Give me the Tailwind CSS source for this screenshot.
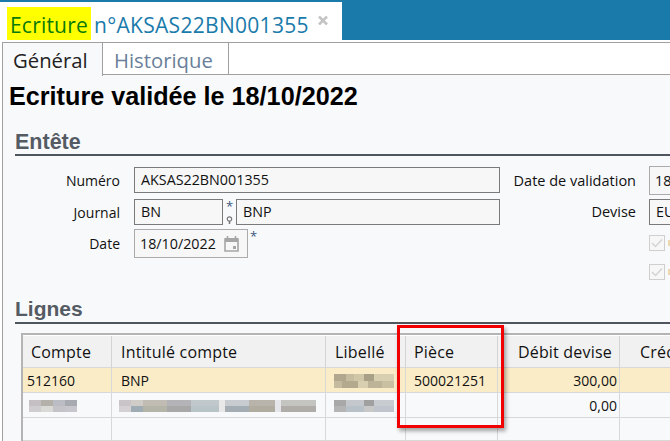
<!DOCTYPE html>
<html><head><meta charset="utf-8"><script src="https://cdn.jsdelivr.net/npm/@tailwindcss/browser@4"></script></head>
<body class="w-[670px] h-[441px] overflow-hidden bg-white font-['Open_Sans','Noto_Sans',sans-serif] text-[14px] text-[#111]">
<div class="relative w-[670px] h-[441px] overflow-hidden">
  <!-- window tab bar -->
  <div class="flex h-[40px] border-t-2 border-[#1a7bab]">
    <div class="w-[342px] flex items-end pl-[7px] bg-white whitespace-nowrap">
      <span class="h-[33px] w-[84px] bg-[#ffff00] text-[#0a7a0a] text-[21px] leading-[36px] pl-[3px] overflow-hidden tracking-[0.2px]">Ecriture</span>
      <span class="h-[33px] w-[227px] text-[#1a7bab] text-[21px] leading-[36px] pl-[3px] tracking-[0.3px]">n°AKSAS22BN001355</span>
      <svg width="10" height="9" viewBox="0 0 10 9" class="mb-[15px]"><path d="M1 .5l8 8M9 .5l-8 8" stroke="#c4c4c4" stroke-width="2.6"/></svg>
    </div>
    <div class="flex-1 bg-[#1a7bab]"></div>
  </div>
  <!-- panel -->
  <div class="mt-[2px] ml-[2px] border-l border-t border-[#a0a0a0] bg-[#f8f9fb] h-[399px]">
    <div class="flex h-[32px] bg-white">
      <div class="w-[100px] h-[33px] bg-[#f8f9fb] border-r border-[#a0a0a0] text-[20.3px] text-[#222] leading-[34px] pl-[10px] relative z-10">Général</div>
      <div class="w-[126px] border-b border-r border-[#a0a0a0] text-[20.3px] text-[#6a7f99] leading-[34px] pl-[11px]">Historique</div>
      <div class="flex-1 border-b border-[#a0a0a0]"></div>
    </div>
    <h1 class="font-['Liberation_Sans',sans-serif] font-bold text-[25.2px] leading-[28px] text-black mt-[7px] ml-[6px] whitespace-nowrap">Ecriture validée le 18/10/2022</h1>
    <!-- Entete -->
    <h2 class="font-['Liberation_Sans',sans-serif] font-bold text-[21.5px] leading-[28px] text-[#555b63] border-b-2 border-[#50565d] ml-[12px] mt-[18px] h-[28px]">Entête</h2>
    <div class="flex ml-[12px] mt-[11px]">
      <div class="w-[495px] shrink-0 flex flex-col">
        <div class="flex items-center h-[26px] mb-[6px]">
          <span class="w-[105px] shrink-0 text-right">Numéro</span>
          <div class="ml-[14px] w-[366px] shrink-0 h-[26px] border border-[#7a7a7a] bg-[#f7f7f7] pl-[6px] leading-[24px] text-[14.3px]">AKSAS22BN001355</div>
        </div>
        <div class="flex items-center h-[26px] mb-[4px]">
          <span class="w-[105px] shrink-0 text-right">Journal</span>
          <div class="ml-[14px] w-[89px] shrink-0 h-[26px] border border-[#7a7a7a] bg-[#f7f7f7] pl-[6px] leading-[24px] text-[14.3px]">BN</div>
          <div class="w-[13px] shrink-0 h-[26px] flex flex-col items-center justify-between text-[#3c5a80] text-[13px] leading-[14px]">
            <span>*</span>
            <svg width="7" height="8" viewBox="0 0 7 8" class="mb-[1px]"><circle cx="3.5" cy="3" r="2.2" fill="none" stroke="#777" stroke-width="1.2"/><path d="M3.5 5v3" stroke="#777" stroke-width="1.5"/></svg>
          </div>
          <div class="w-[264px] shrink-0 h-[26px] border border-[#7a7a7a] bg-[#f7f7f7] pl-[6px] leading-[24px] text-[14.3px]">BNP</div>
        </div>
        <div class="flex items-center h-[29px]">
          <span class="w-[105px] shrink-0 text-right">Date</span>
          <div class="ml-[14px] w-[114px] shrink-0 h-[29px] border border-[#ababab] bg-[#f7f7f7] pl-[5px] pr-[8px] leading-[27px] flex justify-between items-center text-[14.3px]">
            <span>18/10/2022</span>
            <svg width="15" height="16" viewBox="0 0 15 16"><path d="M1 3h13v12H1z" fill="none" stroke="#a6a6a6" stroke-width="1.6"/><path d="M1 2h13v4H1z" fill="#a6a6a6"/><path d="M3.5 0v3M11.5 0v3" stroke="#a6a6a6" stroke-width="1.6"/><path d="M9 10h3v3H9z" fill="#a6a6a6"/></svg>
          </div>
          <span class="self-start text-[#3c5a80] text-[13px] leading-[14px] ml-[2px]">*</span>
        </div>
      </div>
      <div class="flex flex-col shrink-0 w-[200px]">
        <div class="flex items-center h-[29px] -mt-[1px] mb-[4px]">
          <span class="w-[126px] shrink-0 text-right whitespace-nowrap text-[14.5px]">Date de validation</span>
          <div class="ml-[13px] w-[60px] shrink-0 h-[29px] border border-[#ababab] bg-[#f7f7f7] pl-[5px] leading-[27px] whitespace-nowrap text-[14.3px]">18/10/2022</div>
        </div>
        <div class="flex items-center h-[26px] mb-[10px]">
          <span class="w-[126px] shrink-0 text-right text-[14.5px]">Devise</span>
          <div class="ml-[13px] w-[60px] shrink-0 h-[26px] border border-[#7a7a7a] bg-[#f7f7f7] pl-[6px] leading-[24px] text-[14.3px]">EUR</div>
        </div>
        <div class="flex flex-col gap-[13px] pl-[139px]">
          <div class="flex items-center gap-[3px]"><div class="w-[16px] h-[16px] shrink-0 border border-[#cfcfcf] bg-[#f7f7f7] flex items-center justify-center"><svg width="12" height="10" viewBox="0 0 12 10"><path d="M1 5l3.5 3.5L11 1.5" fill="none" stroke="#d4d4d4" stroke-width="1.5"/></svg></div><div class="w-[2px] h-[6px] bg-[#ecd9b0]"></div></div>
          <div class="flex items-center gap-[3px]"><div class="w-[16px] h-[16px] shrink-0 border border-[#cfcfcf] bg-[#f7f7f7] flex items-center justify-center"><svg width="12" height="10" viewBox="0 0 12 10"><path d="M1 5l3.5 3.5L11 1.5" fill="none" stroke="#d4d4d4" stroke-width="1.5"/></svg></div><div class="w-[2px] h-[6px] bg-[#ecd9b0]"></div></div>
        </div>
      </div>
    </div>
    <!-- Lignes -->
    <h2 class="font-['Liberation_Sans',sans-serif] font-bold text-[21px] leading-[24px] text-[#555b63] border-b-2 border-[#50565d] ml-[12px] mt-[17px] h-[27px]">Lignes</h2>
    <div class="ml-[18px] mt-[9px] w-[700px] border-t-2 border-l-2 border-[#b4b4b4]">
      <div class="grid grid-cols-[89px_214px_80px_92px_122px_103px] h-[33px] bg-[#f1f1f1] border-b border-[#d8d8d8] border-t border-t-white text-[16px] leading-[32px] tracking-[0.2px] whitespace-nowrap">
        <div class="border-r border-[#d4d4d4] pl-[8px]">Compte</div>
        <div class="border-r border-[#d4d4d4] pl-[9px]">Intitulé compte</div>
        <div class="border-r border-[#d4d4d4] pl-[9px]">Libellé</div>
        <div class="border-r border-[#d4d4d4] pl-[8px]">Pièce</div>
        <div class="border-r border-[#d4d4d4] pr-[7px] text-right">Débit devise</div>
        <div class="pl-[20px]">Crédit devise</div>
      </div>
      <div class="grid grid-cols-[89px_214px_80px_92px_122px_103px] h-[25px] bg-[#fbecc8] border-b border-[#d8d8d8] leading-[25px]">
        <div class="border-r border-[#d8d8d8] pl-[4px]">512160</div>
        <div class="border-r border-[#d8d8d8] pl-[9px]">BNP</div>
        <div class="border-r border-[#d8d8d8] pl-[8px] flex flex-col justify-center">
          <div class="w-[60px] h-[7px] blur-[0.5px] bg-[linear-gradient(90deg,#b0a78e_0_12px,#c6bc9f_12px_20px,#d0c6a8_20px_30px,#a9a088_30px_40px,#d8cfb0_40px_60px)]"></div>
          <div class="w-[60px] h-[7px] blur-[0.5px] bg-[linear-gradient(90deg,#c4bb9f_0_8px,#b2a98f_8px_24px,#d8cfb0_24px_34px,#bdb398_34px_48px,#c9c0a2_48px_60px)]"></div>
        </div>
        <div class="border-r border-[#d8d8d8] pl-[8px]">500021251</div>
        <div class="border-r border-[#d8d8d8] pr-[2px] text-right">300,00</div>
        <div></div>
      </div>
      <div class="grid grid-cols-[89px_214px_80px_92px_122px_103px] h-[25px] border-b border-[#d8d8d8] leading-[25px]">
        <div class="border-r border-[#d8d8d8] pl-[6px] flex flex-col justify-center">
          <div class="w-[48px] h-[6px] blur-[0.5px] bg-[linear-gradient(90deg,#c4bfc2_0_12px,#b4b0aa_12px_24px,#bcbcc4_24px_36px,#a8aab2_36px_48px)]"></div>
          <div class="w-[48px] h-[6px] blur-[0.5px] bg-[linear-gradient(90deg,#cfcdd0_0_12px,#d9d9d6_12px_24px,#c4c4c8_24px_36px,#c6c6cc_36px_48px)]"></div>
        </div>
        <div class="border-r border-[#d8d8d8] pl-[7px] flex flex-col justify-center">
          <div class="w-[197px] h-[6px] blur-[0.5px] bg-[linear-gradient(90deg,#c8c4c8_0_12px,#d0ccc8_12px_24px,#c0bcb4_24px_48px,#b4b4b8_48px_72px,#c0c8cc_72px_100px,#e8e8e8_100px_106px,#c8ccd0_106px_130px,#b8b4ac_130px_156px,#e4e6ea_156px_162px,#c4c4c0_162px_197px)]"></div>
          <div class="w-[197px] h-[6px] blur-[0.5px] bg-[linear-gradient(90deg,#d4d0d4_0_12px,#a0acb4_12px_24px,#b4b4a8_24px_48px,#a8a8a8_48px_72px,#b8c4c8_72px_100px,#e8e8e8_100px_106px,#a4acb4_106px_130px,#b0aca0_130px_156px,#e4e6ea_156px_162px,#b0aca8_162px_197px)]"></div>
        </div>
        <div class="border-r border-[#d8d8d8] pl-[8px] flex flex-col justify-center">
          <div class="w-[60px] h-[6px] blur-[0.5px] bg-[linear-gradient(90deg,#a8a8a8_0_12px,#c4c8cc_12px_30px,#a0a0a0_30px_40px,#c8ccd0_40px_60px)]"></div>
          <div class="w-[60px] h-[6px] blur-[0.5px] bg-[linear-gradient(90deg,#b4b4b4_0_12px,#b8c0c8_12px_30px,#c8c8c8_30px_40px,#c0c4cc_40px_60px)]"></div>
        </div>
        <div class="border-r border-[#d8d8d8]"></div>
        <div class="border-r border-[#d8d8d8] pr-[2px] text-right">0,00</div>
        <div></div>
      </div>
      <div class="grid grid-cols-[89px_214px_80px_92px_122px_103px] h-[23px] border-b border-[#d8d8d8]">
        <div class="border-r border-[#d8d8d8]"></div><div class="border-r border-[#d8d8d8]"></div><div class="border-r border-[#d8d8d8]"></div><div class="border-r border-[#d8d8d8]"></div><div class="border-r border-[#d8d8d8]"></div><div></div>
      </div>
    </div>
  </div>
  <!-- annotation -->
  <div class="absolute left-[397px] top-[325px] w-[107px] h-[103px] border-[3px] border-[#f00000] shadow-[2px_3px_4px_rgba(0,0,0,0.35)]"></div>
</div>
</body></html>
